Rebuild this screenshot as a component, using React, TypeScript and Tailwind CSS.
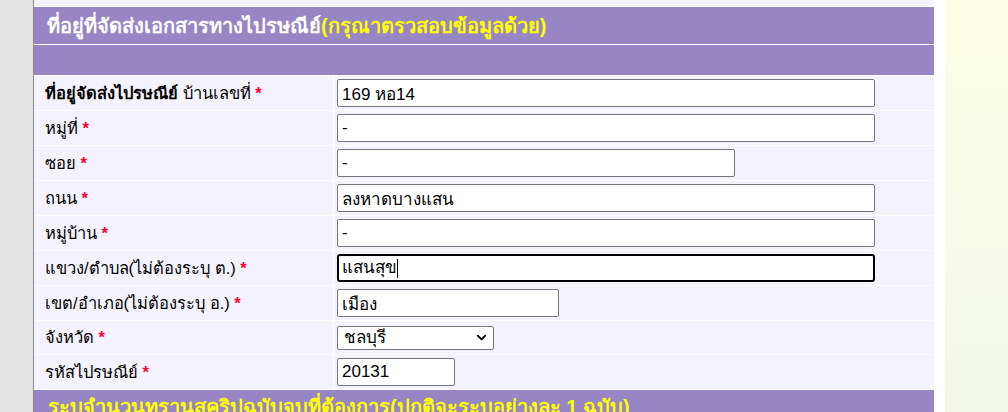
import { FC } from "react"
import { ChevronDown } from "lucide-react"

interface FieldRow {
  label: React.ReactNode
  value: string
  width: string
  focused?: boolean
  select?: boolean
  rowClass?: string
}

const Star = () => <span className="text-[#ff0033] font-bold"> *</span>

const rows: FieldRow[] = [
  {
    label: (
      <>
        <b>ที่อยู่จัดส่งไปรษณีย์</b> บ้านเลขที่
      </>
    ),
    value: "169 หอ14",
    width: "w-[538px]",
  },
  { label: "หมู่ที่", value: "-", width: "w-[538px]" },
  { label: "ซอย", value: "-", width: "w-[398px]" },
  { label: "ถนน", value: "ลงหาดบางแสน", width: "w-[538px]" },
  { label: "หมู่บ้าน", value: "-", width: "w-[538px]" },
  { label: "แขวง/ตำบล(ไม่ต้องระบุ ต.)", value: "แสนสุข", width: "w-[538px]", focused: true },
  { label: "เขต/อำเภอ(ไม่ต้องระบุ อ.)", value: "เมือง", width: "w-[222px]" },
  { label: "จังหวัด", value: "ชลบุรี", width: "w-[157px]", select: true, rowClass: "h-[34px]" },
  { label: "รหัสไปรษณีย์", value: "20131", width: "w-[118px]" },
]

const Field: FC<{ row: FieldRow }> = ({ row }) => {
  if (row.select) {
    return (
      <div
        className={`${row.width} h-[24px] flex items-center justify-between bg-white border border-[#767676] rounded-[2px] pl-[6px] pr-[4px] text-[17px]`}
      >
        <span>{row.value}</span>
        <ChevronDown size={15} strokeWidth={3} className="text-black" />
      </div>
    )
  }
  if (row.focused) {
    return (
      <div
        className={`${row.width} h-[28px] flex items-center bg-white border-2 border-black rounded-[3px] pl-[3px] text-[17px]`}
      >
        <span>{row.value}</span>
        <span className="w-px h-[19px] bg-black" />
      </div>
    )
  }
  return (
    <input
      readOnly
      value={row.value}
      className={`${row.width} h-[28px] bg-white border border-[#767676] rounded-[2px] px-[4px] text-[17px] text-black outline-none`}
    />
  )
}

export default function App() {
  return (
    <div
      className="w-[1008px] h-[412px] overflow-hidden flex bg-white text-black"
      style={{ fontFamily: '"Liberation Sans", "Noto Sans", sans-serif' }}
    >
      {/* left gray strip */}
      <div className="w-[34px] bg-[#e3e3e3] border-r border-[#8a8a8a]" />

      {/* form table */}
      <div className="w-[900px] flex flex-col bg-[#f4f2fc]">
        <div className="h-[7px] shrink-0 border-b border-white" />
        <div className="h-[38px] shrink-0 bg-[#9885c3] flex items-center px-[13px] text-[20px] font-bold text-white border-b border-white">
          ที่อยู่ที่จัดส่งเอกสารทางไปรษณีย์
          <span className="text-[#ffff00]">(กรุณาตรวสอบข้อมูลด้วย)</span>
        </div>
        <div className="h-[30px] shrink-0 bg-[#9885c3]" />

        {rows.map((row, i) => (
          <div key={i} className={`${row.rowClass ?? "h-[35px]"} shrink-0 flex border-t border-white`}>
            <div className="w-[300px] flex items-center pl-[11px] text-[16.5px] border-r border-white">
              <span>
                {row.label}
                <Star />
              </span>
            </div>
            <div className="flex-1 flex items-center pl-[3px]">
              <Field row={row} />
            </div>
          </div>
        ))}

        <div className="flex-1 min-h-0 overflow-hidden bg-[#9885c3] border-t border-white px-[14px] pt-[4px] text-[20px] font-bold text-[#ffff00] leading-[26px] whitespace-nowrap">
          ระบุจำนวนทรานสคริปฉบับจบที่ต้องการ(ปกติจะระบุอย่างละ 1 ฉบับ)
        </div>
      </div>

      <div className="w-[11px] bg-white" />
      <div className="flex-1 bg-gradient-to-b from-[#fcffe5] to-[#f3f7e9]" />
    </div>
  )
}
